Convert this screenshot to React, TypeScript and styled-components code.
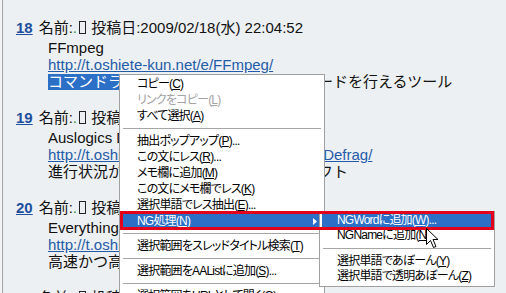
import { ReactNode } from 'react';
import styled, { createGlobalStyle } from 'styled-components';

const GlobalStyle = createGlobalStyle`
  html, body {
    margin: 0;
    padding: 0;
    overflow: hidden;
    background: #edf0f2;
  }
`;

interface IPost {
  num: number;
  time: string;
  title: string;
  url: string;
  lead: string;
  selected?: string;
}

const posts: IPost[] = [
  {
    num: 18,
    time: '22:04:52',
    title: 'FFmpeg',
    url: 'http://t.oshiete-kun.net/e/FFmpeg/',
    selected: 'コマンドライン',
    lead: 'から動画や音声のエンコードを行えるツール',
  },
  {
    num: 19,
    time: '22:06:13',
    title: 'Auslogics Disk Defrag',
    url: 'http://t.oshiete-kun.net/e/Auslogics_Disk_Defrag/',
    lead: '進行状況が一目で分かる高速デフラグソフト',
  },
  {
    num: 20,
    time: '22:08:40',
    title: 'Everything',
    url: 'http://t.oshiete-kun.net/e/Everything/',
    lead: '高速かつ高機能なファイル検索ソフト',
  },
  {
    num: 21,
    time: '22:10:05',
    title: 'Wireshark',
    url: 'http://t.oshiete-kun.net/e/Wireshark/',
    lead: 'ネットワークの通信内容を解析できるソフト',
  },
];

type Entry = { label: string; key?: string; tail?: string; disabled?: boolean; active?: boolean; sub?: boolean } | 'sep';

const mainMenu: Entry[] = [
  { label: 'コピー', key: 'C' },
  { label: 'リンクをコピー', key: 'L', disabled: true },
  { label: 'すべて選択', key: 'A' },
  'sep',
  { label: '抽出ポップアップ', key: 'P', tail: '...' },
  { label: 'この文にレス', key: 'R', tail: '...' },
  { label: 'メモ欄に追加', key: 'M' },
  { label: 'この文にメモ欄でレス', key: 'K' },
  { label: '選択単語でレス抽出', key: 'E', tail: '...' },
  { label: 'NG処理', key: 'N', active: true, sub: true },
  'sep',
  { label: '選択範囲をスレッドタイトル検索', key: 'T' },
  'sep',
  { label: '選択範囲をAAListに追加', key: 'S', tail: '...' },
  'sep',
  { label: '選択範囲をURLとして開く', key: 'O' },
];

const ngMenu: Entry[] = [
  { label: 'NGWordに追加', key: 'W', tail: '...', active: true },
  { label: 'NGNameに追加', key: 'N' },
  'sep',
  { label: '選択単語であぼーん', key: 'Y' },
  { label: '選択単語で透明あぼーん', key: 'Z' },
];

const renderMenu = (entries: Entry[], compact?: boolean): ReactNode =>
  entries.map((e, i) =>
    e === 'sep' ? (
      <Separator key={i} $compact={compact} />
    ) : (
      <Item key={i} $compact={compact} $active={e.active} $disabled={e.disabled}>
        <span>
          {e.label}(<u>{e.key}</u>){e.tail}
        </span>
        {e.sub && (
          <svg width="4" height="7" viewBox="0 0 4 7">
            <path d="M0 0 L4 3.5 L0 7 Z" fill={e.active ? '#fff' : '#000'} />
          </svg>
        )}
      </Item>
    ),
  );

export default function App() {
  return (
    <>
      <GlobalStyle />
      <Frame>
        <Thread>
          {posts.map(({ num, time, title, url, lead, selected }) => (
            <Post key={num}>
              <Header>
                <ResNum>{num}</ResNum>
                名前:<Dot>.</Dot>
                <Tofu /> 投稿日:2009/02/18(水) {time}
              </Header>
              <Body>
                <Line>{title}</Line>
                <Line>
                  <UrlLink>{url}</UrlLink>
                </Line>
                <Line>
                  {selected && <Selected>{selected}</Selected>}
                  {lead}
                </Line>
              </Body>
            </Post>
          ))}
        </Thread>

        <Menu $left={119} $top={74} $width={206}>
          {renderMenu(mainMenu)}
        </Menu>
        <Menu $left={319} $top={211} $width={176}>
          {renderMenu(ngMenu, true)}
        </Menu>

        <Marker />

        <Cursor width="13" height="21" viewBox="0 0 13 21">
          <path d="M0.5 0.5 L0.5 16.5 L4.5 12.5 L7.5 19.5 L10 18.5 L7 11.5 L12 11.5 Z" fill="#fff" stroke="#000" strokeWidth="1" />
        </Cursor>
      </Frame>
    </>
  );
}

const Frame = styled.div`
  position: relative;
  width: 506px;
  height: 293px;
  overflow: hidden;
  box-sizing: border-box;
  padding-left: 2px;
  background: #f4f4f4;
`;

const Thread = styled.div`
  height: 100%;
  box-sizing: border-box;
  border-left: 1px solid #a3a3a3;
  background: #edf0f2;
  padding: 17px 0 0 13px;
  font-family: 'Liberation Sans', 'Noto Sans CJK JP', sans-serif;
  font-size: 15px;
  color: #111;
`;

const Post = styled.div`
  margin-bottom: 17px;
`;

const Header = styled.div`
  height: 21px;
  line-height: 21px;
  white-space: nowrap;
`;

const ResNum = styled.span`
  color: #1d4f9e;
  font-weight: bold;
  text-decoration: underline;
  margin-right: 6px;
`;

const Dot = styled.span`
  color: #2f9a35;
`;

const Tofu = styled.span`
  display: inline-block;
  width: 5px;
  height: 11px;
  margin: 0 1px 0 2px;
  border: 1px solid #222;
  vertical-align: -1px;
`;

const Body = styled.div`
  padding: 1px 0 0 32px;
`;

const Line = styled.div`
  height: 17px;
  line-height: 17px;
  white-space: nowrap;
`;

const UrlLink = styled.span`
  color: #245ba8;
  text-decoration: underline;
`;

const Selected = styled.span`
  display: inline-block;
  line-height: 16px;
  vertical-align: top;
  margin-top: 1px;
  background: #2b6fc6;
  color: #fff;
`;

interface IMenu {
  $left: number;
  $top: number;
  $width: number;
}

const Menu = styled.div<IMenu>`
  position: absolute;
  left: ${(p) => p.$left}px;
  top: ${(p) => p.$top}px;
  width: ${(p) => p.$width}px;
  box-sizing: border-box;
  padding: 1px 2px 2px;
  border: 1px solid #a0a0a0;
  background: #fff;
  font-family: 'Liberation Sans', 'Noto Sans CJK JP', sans-serif;
  font-size: 12px;
  font-feature-settings: 'palt';
  letter-spacing: -0.8px;
  color: #000;

  u {
    text-underline-offset: 1px;
  }
`;

interface IItem {
  $compact?: boolean;
  $active?: boolean;
  $disabled?: boolean;
}

const Item = styled.div<IItem>`
  display: flex;
  align-items: center;
  justify-content: space-between;
  height: ${(p) => (p.$compact ? 15 : 16)}px;
  line-height: ${(p) => (p.$compact ? 15 : 16)}px;
  padding: 0 5px 0 15px;
  white-space: nowrap;
  background: ${(p) => (p.$active ? '#2b6fc6' : 'transparent')};
  color: ${(p) => (p.$active ? '#fff' : p.$disabled ? '#a3a3a3' : '#000')};
`;

const Separator = styled.div<{ $compact?: boolean }>`
  height: ${(p) => (p.$compact ? 11 : 9)}px;
  display: flex;
  align-items: center;
  padding: 0 1px;

  &::after {
    content: '';
    flex: 1;
    border-top: 1px solid #a6a6a6;
  }
`;

const Marker = styled.div`
  position: absolute;
  left: 120px;
  top: 211px;
  width: 374px;
  height: 19px;
  box-sizing: border-box;
  border: 3px solid #e3001b;
`;

const Cursor = styled.svg`
  position: absolute;
  left: 426px;
  top: 228px;
`;
